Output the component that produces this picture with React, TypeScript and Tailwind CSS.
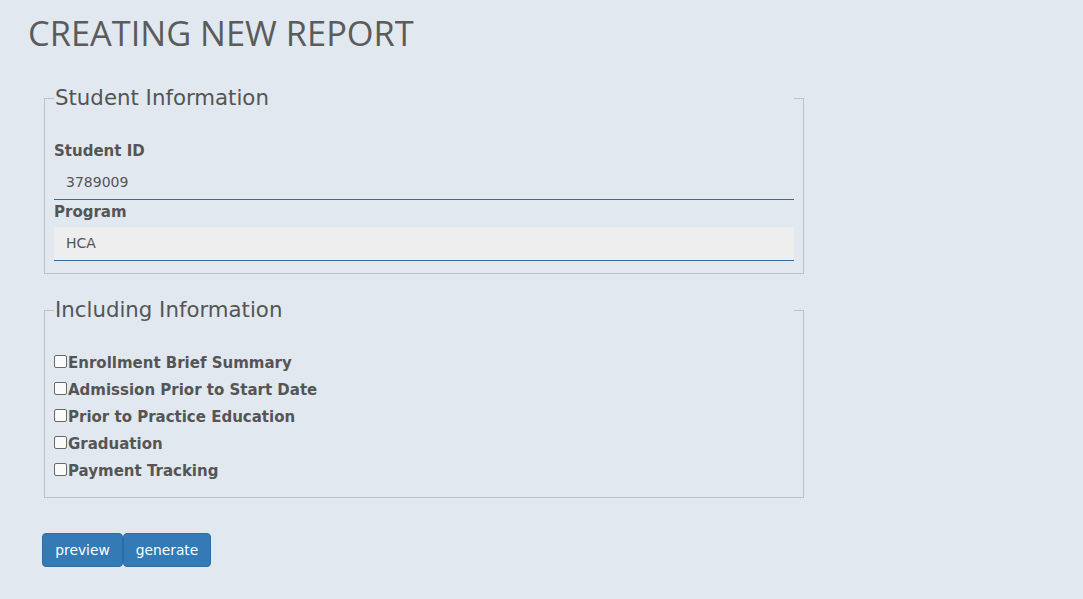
import React from "react";

const items = [
  "Enrollment Brief Summary",
  "Admission Prior to Start Date",
  "Prior to Practice Education",
  "Graduation",
  "Payment Tracking",
];

export default function App() {
  return (
    <div
      className="min-h-[599px] w-full bg-[#e1e8f0] text-[#555555]"
      style={{ fontFamily: '"DejaVu Sans", Verdana, sans-serif' }}
    >
      <div className="pl-[28px] pt-[10px]">
        <h1 className="text-[34.4px] leading-[46px] font-normal text-[#5b5b5b] font-['Open_Sans',sans-serif]">
          CREATING NEW REPORT
        </h1>
      </div>

      <fieldset className="ml-[44px] mt-[27px] w-[760px] border border-[#c0c0c0] px-[9px] pb-[12px]">
        <legend className="w-full pl-[1px] text-[21.3px] leading-[30px] border-b border-[#e6eaf0] text-[#555555]">
          Student Information
        </legend>
        <div className="pt-[27px]">
          <label className="block text-[15px] font-bold leading-[20px] mb-[5px]">Student ID</label>
          <div className="h-[34px] border-b border-[#2e6da4] pl-[12px] flex items-center text-[14px]">
            3789009
          </div>
          <label className="block text-[15px] font-bold leading-[20px] mt-[2px] mb-[5px]">Program</label>
          <div className="h-[34px] border-b border-[#2e6da4] bg-[#eeeeee] pl-[12px] flex items-center text-[14px]">
            HCA
          </div>
        </div>
      </fieldset>

      <fieldset className="ml-[44px] mt-[21px] w-[760px] border border-[#c0c0c0] px-[9px] pb-[12px]">
        <legend className="w-full pl-[1px] text-[21.3px] leading-[30px] border-b border-[#e6eaf0] text-[#555555]">
          Including Information
        </legend>
        <div className="pt-[24px] flex flex-col">
          {items.map((t) => (
            <label key={t} className="flex items-start h-[27px] text-[15px] leading-[27px] font-bold">
              <span className="inline-block mt-[5px] w-[13px] h-[13px] border border-[#6a6a6a] rounded-[2px] bg-[#fafafa] mr-[1px]" />
              <span>{t}</span>
            </label>
          ))}
        </div>
      </fieldset>

      <div className="ml-[42px] mt-[35px] flex">
        <button className="h-[34px] w-[81px] text-[13.8px] text-white bg-[#337ab7] border border-[#2e6da4] rounded-[4px]">
          preview
        </button>
        <button className="h-[34px] w-[88px] text-[13.8px] text-white bg-[#337ab7] border border-[#2e6da4] rounded-[4px]">
          generate
        </button>
      </div>
    </div>
  );
}
